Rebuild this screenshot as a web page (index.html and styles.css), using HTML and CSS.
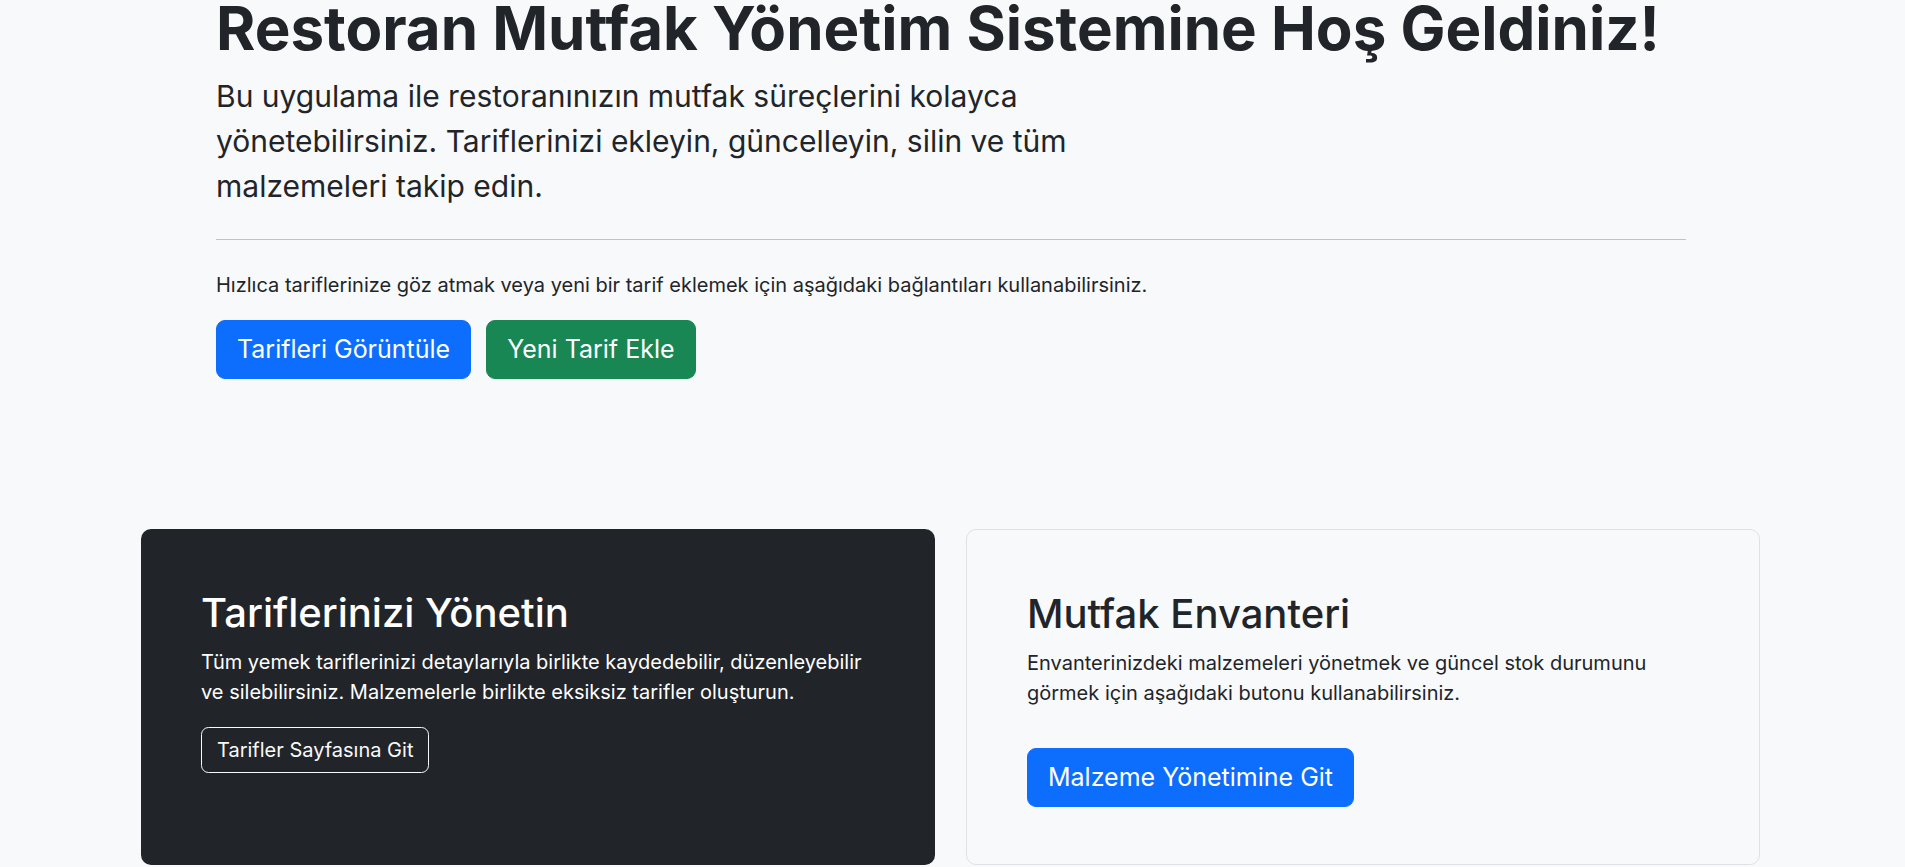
FILE: index.html
```html
<!DOCTYPE html>
<html lang="tr">
<head>
<meta charset="utf-8">
<title>Restoran Mutfak Yönetim Sistemi</title>
<link rel="stylesheet" href="styles.css">
</head>
<body>
<main class="page">
  <section class="hero">
    <h1 class="hero-title">Restoran Mutfak Yönetim Sistemine Hoş Geldiniz!</h1>
    <p class="hero-lead">Bu uygulama ile restoranınızın mutfak süreçlerini kolayca yönetebilirsiniz. Tariflerinizi ekleyin, güncelleyin, silin ve tüm malzemeleri takip edin.</p>
    <hr class="hero-rule">
    <p class="hero-text">Hızlıca tariflerinize göz atmak veya yeni bir tarif eklemek için aşağıdaki bağlantıları kullanabilirsiniz.</p>
    <div class="hero-actions">
      <a class="btn btn-lg btn-primary" href="#">Tarifleri Görüntüle</a>
      <a class="btn btn-lg btn-success" href="#">Yeni Tarif Ekle</a>
    </div>
  </section>
  <section class="cards">
    <div class="card card-dark">
      <h2 class="card-title">Tariflerinizi Yönetin</h2>
      <p class="card-text">Tüm yemek tariflerinizi detaylarıyla birlikte kaydedebilir, düzenleyebilir ve silebilirsiniz. Malzemelerle birlikte eksiksiz tarifler oluşturun.</p>
      <a class="btn btn-outline-light" href="#">Tarifler Sayfasına Git</a>
    </div>
    <div class="card card-light">
      <h2 class="card-title">Mutfak Envanteri</h2>
      <p class="card-text">Envanterinizdeki malzemeleri yönetmek ve güncel stok durumunu görmek için aşağıdaki butonu kullanabilirsiniz.</p>
      <a class="btn btn-lg btn-primary btn-spaced" href="#">Malzeme Yönetimine Git</a>
    </div>
  </section>
</main>
</body>
</html>
```

FILE: styles.css
```css
* { box-sizing: border-box; }

html, body {
  margin: 0;
  background: #f8f9fa;
}

body {
  font-family: Inter, "Noto Sans", "DejaVu Sans", sans-serif;
  color: #212529;
  font-size: 20px;
  line-height: 1.5;
  overflow: hidden;
}

.page {
  padding: 0 145px 0 141px;
}

.hero {
  padding: 0 74px 0 75px;
  margin-top: -8px;
}

.hero-title {
  font-size: 60px;
  font-weight: 700;
  line-height: 1.2;
  margin: 0 0 10px;
}

.hero-lead {
  font-size: 30px;
  line-height: 45px;
  max-width: 980px;
  margin: 0;
}

.hero-rule {
  border: 0;
  border-top: 1px solid rgba(33, 37, 41, 0.25);
  margin: 30px 0 0;
  height: 0;
}

.hero-text {
  margin: 30px 0 0;
  line-height: 30px;
}

.hero-actions {
  display: flex;
  gap: 15px;
  margin-top: 20px;
}

.btn {
  display: inline-block;
  text-decoration: none;
  border: 1px solid transparent;
  font-size: 20px;
  line-height: 30px;
  padding: 7px 15px;
  border-radius: 7.5px;
  color: #fff;
}

.btn-lg {
  font-size: 25px;
  line-height: 37px;
  padding: 10px 20px;
  border-radius: 9px;
}

.btn-primary {
  background: #0d6efd;
  border-color: #0d6efd;
}

.btn-success {
  background: #198754;
  border-color: #198754;
}

.btn-outline-light {
  color: #f8f9fa;
  border-color: #f8f9fa;
}

.cards {
  display: grid;
  grid-template-columns: 1fr 1fr;
  gap: 31px;
  margin-top: 150px;
}

.card {
  border-radius: 10px;
  padding: 60px 60px 57px;
}

.card-dark {
  background: #212529;
  color: #fff;
}

.card-light {
  background: #f8f9fa;
  border: 1px solid #dee2e6;
}

.card-title {
  font-size: 40px;
  font-weight: 500;
  line-height: 1.2;
  margin: 0 0 10px;
}

.card-text {
  margin: 0 0 20px;
  line-height: 30px;
}

.btn-spaced {
  margin-top: 20px;
}
```
